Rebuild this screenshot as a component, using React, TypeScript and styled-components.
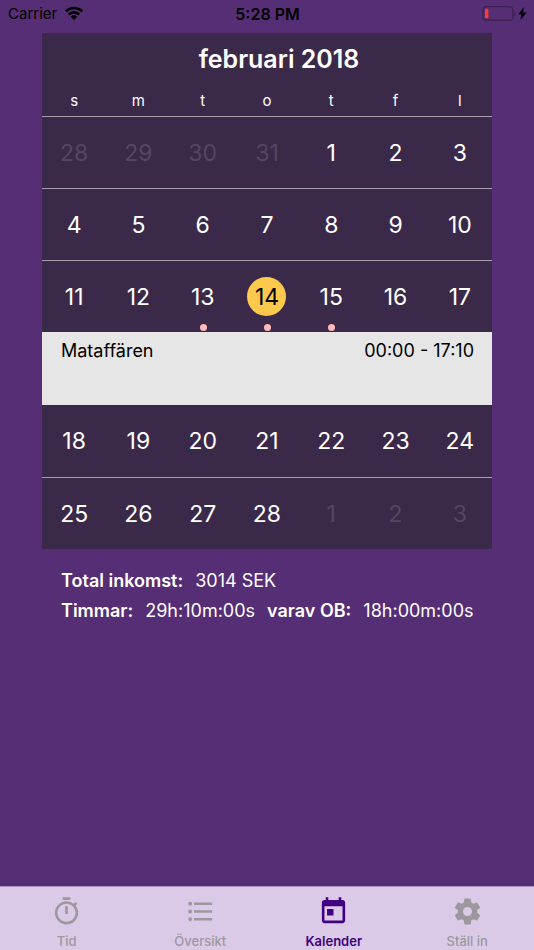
import React from "react";
import styled, { createGlobalStyle } from "styled-components";

const GlobalStyle = createGlobalStyle`
  * { box-sizing: border-box; }
  body {
    margin: 0;
    background: #562e76;
    font-family: Inter, "Liberation Sans", sans-serif;
    color: #fff;
  }
  button {
    margin: 0;
    padding: 0;
    border: 0;
    background: none;
    color: inherit;
    font: inherit;
    cursor: pointer;
  }
`;

const Screen = styled.div`
  min-height: 100vh;
  display: flex;
  flex-direction: column;
`;

const StatusBar = styled.header`
  height: 28px;
  padding: 0 7px 0 8px;
  display: grid;
  grid-template-columns: 1fr auto 1fr;
  align-items: center;
  color: #000;
  font-size: 15px;
  line-height: 28px;
`;

const StatusSide = styled.div<{ $end?: boolean }>`
  display: flex;
  align-items: center;
  justify-content: ${(p) => (p.$end ? "flex-end" : "flex-start")};
  gap: ${(p) => (p.$end ? 2 : 8)}px;
`;

const Clock = styled.time`
  font-size: 16px;
  font-weight: 600;
`;

const Main = styled.main`
  flex: 1;
  padding: 5px 42px 24px;
`;

const Calendar = styled.section`
  background: #3b294a;
`;

const MonthTitle = styled.h1`
  margin: 0;
  padding: 8px 0 0 24px;
  font-size: 25px;
  line-height: 36px;
  font-weight: 600;
  text-align: center;
`;

const Grid = styled.table`
  width: 100%;
  table-layout: fixed;
  border-collapse: collapse;
`;

const Weekday = styled.th`
  height: 39px;
  padding: 8px 0 0;
  font-size: 15px;
  font-weight: 400;
  text-align: center;
`;

const Week = styled.tr<{ $line?: boolean }>`
  height: 72px;
  border-top: ${(p) => (p.$line ? "1px solid #a69eac" : "0")};
`;

const DayCell = styled.td`
  padding: 0;
`;

const DayButton = styled.button<{ $muted?: boolean }>`
  position: relative;
  width: 100%;
  height: 71px;
  display: flex;
  align-items: center;
  justify-content: center;
  font-size: 23px;
  color: ${(p) => (p.$muted ? "#57465f" : "#fff")};
`;

const DayNumber = styled.span<{ $selected?: boolean }>`
  width: 39px;
  height: 39px;
  border-radius: 50%;
  line-height: 41px;
  text-align: center;
  background: ${(p) => (p.$selected ? "#fdc94c" : "transparent")};
  color: ${(p) => (p.$selected ? "#000" : "inherit")};
`;

const EventDot = styled.span`
  position: absolute;
  bottom: 1px;
  left: 50%;
  margin-left: -3px;
  width: 7px;
  height: 7px;
  border-radius: 50%;
  background: #ffb9b9;
`;

const AgendaCell = styled.td`
  height: 73px;
  padding: 0;
  background: #e6e6e6;
  color: #000;
  vertical-align: top;
`;

const Shift = styled.div`
  padding: 7px 18px 0 19px;
  display: flex;
  justify-content: space-between;
  font-size: 18px;
  line-height: 24px;
`;

const Summary = styled.dl`
  margin: 0;
  padding: 17px 0 0 19px;
  font-size: 18px;
  line-height: 30px;
`;

const SummaryRow = styled.div`
  display: flex;
  gap: 12px;
  white-space: nowrap;
`;

const SummaryLabel = styled.dt`
  font-weight: 600;
`;

const SummaryValue = styled.dd`
  margin: 0;
`;

const TabBar = styled.nav`
  height: 64px;
  display: grid;
  grid-template-columns: repeat(4, 1fr);
  border-top: 1px solid #aa98bb;
  background: #dacae7;
`;

const Tab = styled.button<{ $active?: boolean }>`
  display: flex;
  flex-direction: column;
  align-items: center;
  padding-top: 9px;
  gap: 6px;
  font-size: 13px;
  line-height: 16px;
  font-weight: ${(p) => (p.$active ? 600 : 500)};
  color: ${(p) => (p.$active ? "#420080" : "#9b989e")};
`;

type Day = { n: number; muted?: boolean; event?: boolean; selected?: boolean };

const span = (from: number, to: number, muted = false): Day[] =>
  Array.from({ length: to - from + 1 }, (_, i) => ({ n: from + i, muted }));

const weeks: Day[][] = [
  [...span(28, 31, true), ...span(1, 3)],
  span(4, 10),
  span(11, 17).map((d) => ({
    ...d,
    event: d.n >= 13 && d.n <= 15,
    selected: d.n === 14,
  })),
  span(18, 24),
  [...span(25, 28), ...span(1, 3, true)],
];

const tabs = [
  {
    label: "Tid",
    path: "M15 1H9v2h6V1zm-4 13h2V8h-2v6zm8.03-6.61l1.42-1.42c-.43-.51-.9-.99-1.41-1.41l-1.42 1.42A8.96 8.96 0 0 0 12 4c-4.97 0-9 4.03-9 9s4.02 9 9 9a8.99 8.99 0 0 0 7.03-14.61zM12 20c-3.87 0-7-3.13-7-7s3.13-7 7-7 7 3.13 7 7-3.13 7-7 7z",
  },
  {
    label: "Översikt",
    path: "M4 10.5c-.83 0-1.5.67-1.5 1.5s.67 1.5 1.5 1.5 1.5-.67 1.5-1.5-.67-1.5-1.5-1.5zm0-6c-.83 0-1.5.67-1.5 1.5S3.17 7.5 4 7.5 5.5 6.83 5.5 6 4.83 4.5 4 4.5zm0 12c-.83 0-1.5.68-1.5 1.5s.68 1.5 1.5 1.5 1.5-.68 1.5-1.5-.67-1.5-1.5-1.5zM7 19h14v-2H7v2zm0-6h14v-2H7v2zm0-8v2h14V5H7z",
  },
  {
    label: "Kalender",
    active: true,
    path: "M19 3h-1V1h-2v2H8V1H6v2H5c-1.11 0-1.99.9-1.99 2L3 19c0 1.1.89 2 2 2h14c1.1 0 2-.9 2-2V5c0-1.1-.9-2-2-2zm0 16H5V8h14v11zM7 10h5v5H7z",
  },
  {
    label: "Ställ in",
    path: "M19.43 12.98c.04-.32.07-.64.07-.98s-.03-.66-.07-.98l2.11-1.65c.19-.15.24-.42.12-.64l-2-3.46c-.12-.22-.39-.3-.61-.22l-2.49 1c-.52-.4-1.08-.73-1.69-.98l-.38-2.65A.49.49 0 0 0 14 2h-4c-.25 0-.46.18-.49.42l-.38 2.65c-.61.25-1.17.59-1.69.98l-2.49-1c-.23-.09-.49 0-.61.22l-2 3.46c-.13.22-.07.49.12.64l2.11 1.65c-.04.32-.07.65-.07.98s.03.66.07.98l-2.11 1.65c-.19.15-.24.42-.12.64l2 3.46c.12.22.39.3.61.22l2.49-1c.52.4 1.08.73 1.69.98l.38 2.65c.03.24.24.42.49.42h4c.25 0 .46-.18.49-.42l.38-2.65c.61-.25 1.17-.59 1.69-.98l2.49 1c.23.09.49 0 .61-.22l2-3.46c.12-.22.07-.49-.12-.64l-2.11-1.65zM12 15.5c-1.93 0-3.5-1.57-3.5-3.5s1.57-3.5 3.5-3.5 3.5 1.57 3.5 3.5-1.57 3.5-3.5 3.5z",
  },
];

const WifiIcon = () => (
  <svg width="18" height="16" viewBox="0 0 18 16" aria-hidden="true">
    <g fill="none" stroke="#000" strokeWidth="2.6">
      <path d="M.9 5.300a11.500 11.500 0 0 1 16.200 0" />
      <path d="M3.800 8.500a7.400 7.400 0 0 1 10.400 0" />
    </g>
    <path d="M9 14l-3.300-3.300a4.600 4.600 0 0 1 6.600 0z" fill="#000" />
  </svg>
);

const BatteryIcon = () => (
  <svg width="34" height="16" viewBox="0 0 34 16" aria-hidden="true">
    <rect x="1" y="0.7" width="30" height="13.5" rx="3.5" fill="none" stroke="#3b214f" strokeWidth="1.3" />
    <rect x="3" y="2.700" width="3.4" height="9.500" rx="1" fill="#ff3b30" />
    <path d="M32.3 5.200c1.6.8 1.6 3.700 0 4.500z" fill="#3b214f" />
  </svg>
);

const BoltIcon = () => (
  <svg width="9" height="14" viewBox="0 0 9 14" aria-hidden="true">
    <path d="M5.800 0L.4 7.300h3L2.400 13 8.600 5.400H5.200z" fill="#000" />
  </svg>
);

export default function App() {
  return (
    <Screen>
      <GlobalStyle />
      <StatusBar>
        <StatusSide>
          <span>Carrier</span>
          <WifiIcon />
        </StatusSide>
        <Clock>5:28 PM</Clock>
        <StatusSide $end>
          <BatteryIcon />
          <BoltIcon />
        </StatusSide>
      </StatusBar>
      <Main>
        <Calendar>
          <MonthTitle>februari 2018</MonthTitle>
          <Grid>
            <thead>
              <tr>
                {["s", "m", "t", "o", "t", "f", "l"].map((d, i) => (
                  <Weekday key={i} scope="col">{d}</Weekday>
                ))}
              </tr>
            </thead>
            <tbody>
              {weeks.map((week, w) => (
                <React.Fragment key={w}>
                  <Week $line={w !== 3}>
                    {week.map((d) => (
                      <DayCell key={d.n}>
                        <DayButton type="button" $muted={d.muted}>
                          <DayNumber $selected={d.selected}>{d.n}</DayNumber>
                          {d.event && <EventDot />}
                        </DayButton>
                      </DayCell>
                    ))}
                  </Week>
                  {w === 2 && (
                    <tr>
                      <AgendaCell colSpan={7}>
                        <Shift>
                          <span>Mataffären</span>
                          <span>00:00 - 17:10</span>
                        </Shift>
                      </AgendaCell>
                    </tr>
                  )}
                </React.Fragment>
              ))}
            </tbody>
          </Grid>
        </Calendar>
        <Summary>
          <SummaryRow>
            <SummaryLabel>Total inkomst:</SummaryLabel>
            <SummaryValue>3014 SEK</SummaryValue>
          </SummaryRow>
          <SummaryRow>
            <SummaryLabel>Timmar:</SummaryLabel>
            <SummaryValue>29h:10m:00s</SummaryValue>
            <SummaryLabel>varav OB:</SummaryLabel>
            <SummaryValue>18h:00m:00s</SummaryValue>
          </SummaryRow>
        </Summary>
      </Main>
      <TabBar>
        {tabs.map((t) => (
          <Tab key={t.label} type="button" $active={t.active} aria-current={t.active ? "page" : undefined}>
            <svg width="31" height="31" viewBox="0 0 24 24" fill="currentColor" aria-hidden="true">
              <path d={t.path} />
            </svg>
            <span>{t.label}</span>
          </Tab>
        ))}
      </TabBar>
    </Screen>
  );
}
